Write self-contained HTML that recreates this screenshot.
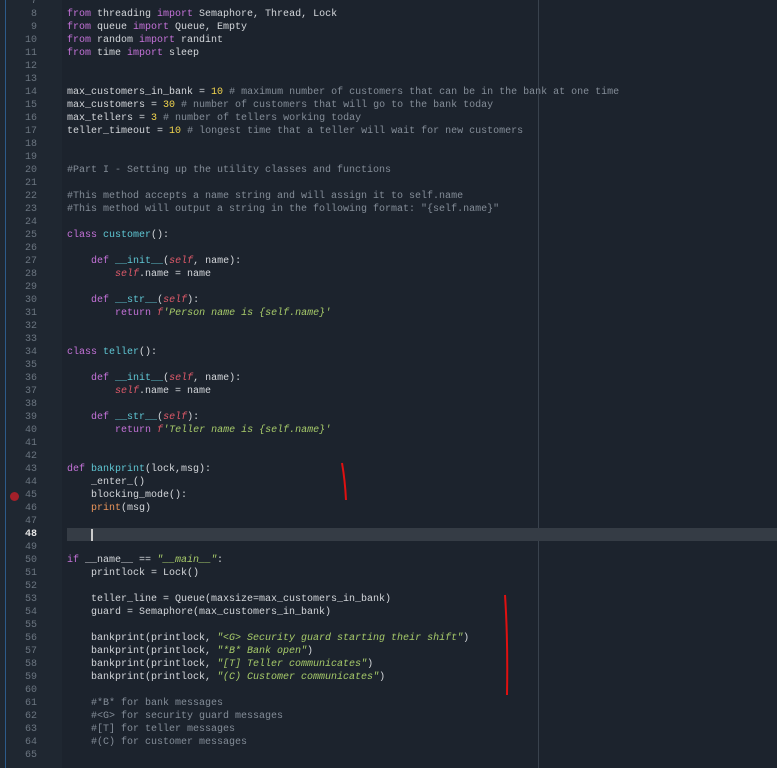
<!DOCTYPE html><html><head><meta charset="utf-8"><style>
body{margin:0;width:777px;height:768px;overflow:hidden;background:#1c232d;font-family:"Liberation Mono",monospace;font-size:10px;}
#g{position:absolute;left:0;top:0;width:62px;height:768px;background:#1f2731;}
#b{position:absolute;left:5px;top:0;width:1px;height:768px;background:#2d5b8a;}
#r{position:absolute;left:538px;top:0;width:1px;height:768px;background:#39424d;}
#hl{position:absolute;left:67px;top:528px;width:710px;height:13px;background:#353c45;}
#cur{position:absolute;left:91px;top:529px;width:2px;height:12px;background:#ccc;}
#bp{position:absolute;left:10px;top:492px;width:9px;height:9px;border-radius:50%;background:#a3202a;}
pre{margin:0;position:absolute;top:-5px;line-height:13px;font:inherit;line-height:13px;}
#n{left:0;width:37px;text-align:right;color:#6b7580;}
#c{left:67px;color:#d4d7db;}
.k{color:#c472d8}.n{color:#f2d54e}.m{color:#848d98}.s{color:#a8cc6a;font-style:italic}.f{color:#5fc7d4}.p{color:#e9945a}.e{color:#e05a6a;font-style:italic}
</style></head><body>
<div id="g"></div><div id="b"></div><div id="r"></div><div id="hl"></div><div id="cur"></div><div id="bp"></div>
<pre id="n">7
8
9
10
11
12
13
14
15
16
17
18
19
20
21
22
23
24
25
26
27
28
29
30
31
32
33
34
35
36
37
38
39
40
41
42
43
44
45
46
47
<b style="color:#e6e6e6">48</b>
49
50
51
52
53
54
55
56
57
58
59
60
61
62
63
64
65</pre>
<pre id="c">

<span class="k">from</span> threading <span class="k">import</span> Semaphore, Thread, Lock
<span class="k">from</span> queue <span class="k">import</span> Queue, Empty
<span class="k">from</span> random <span class="k">import</span> randint
<span class="k">from</span> time <span class="k">import</span> sleep


max_customers_in_bank = <span class="n">10</span> <span class="m"># maximum number of customers that can be in the bank at one time</span>
max_customers = <span class="n">30</span> <span class="m"># number of customers that will go to the bank today</span>
max_tellers = <span class="n">3</span> <span class="m"># number of tellers working today</span>
teller_timeout = <span class="n">10</span> <span class="m"># longest time that a teller will wait for new customers</span>


<span class="m">#Part I - Setting up the utility classes and functions</span>

<span class="m">#This method accepts a name string and will assign it to self.name</span>
<span class="m">#This method will output a string in the following format: "{self.name}"</span>

<span class="k">class</span> <span class="f">customer</span>():

    <span class="k">def</span> <span class="f">__init__</span>(<span class="e">self</span>, name):
        <span class="e">self</span>.name = name

    <span class="k">def</span> <span class="f">__str__</span>(<span class="e">self</span>):
        <span class="k">return</span> <span class="s"><span class="e">f</span>'Person name is {self.name}'</span>


<span class="k">class</span> <span class="f">teller</span>():

    <span class="k">def</span> <span class="f">__init__</span>(<span class="e">self</span>, name):
        <span class="e">self</span>.name = name

    <span class="k">def</span> <span class="f">__str__</span>(<span class="e">self</span>):
        <span class="k">return</span> <span class="s"><span class="e">f</span>'Teller name is {self.name}'</span>


<span class="k">def</span> <span class="f">bankprint</span>(lock,msg):
    _enter_()
    blocking_mode():
    <span class="p">print</span>(msg)



<span class="k">if</span> __name__ == <span class="s">"__main__"</span>:
    printlock = Lock()

    teller_line = Queue(maxsize=max_customers_in_bank)
    guard = Semaphore(max_customers_in_bank)

    bankprint(printlock, <span class="s">"&lt;G&gt; Security guard starting their shift"</span>)
    bankprint(printlock, <span class="s">"*B* Bank open"</span>)
    bankprint(printlock, <span class="s">"[T] Teller communicates"</span>)
    bankprint(printlock, <span class="s">"(C) Customer communicates"</span>)

    <span class="m">#*B* for bank messages</span>
    <span class="m">#&lt;G&gt; for security guard messages</span>
    <span class="m">#[T] for teller messages</span>
    <span class="m">#(C) for customer messages</span>
</pre>
<svg style="position:absolute;left:0;top:0" width="777" height="768"><path d="M342 463 Q345 480 346 500" stroke="#e01010" stroke-width="2" fill="none"/><path d="M505 595 Q508 640 507 695" stroke="#e01010" stroke-width="2" fill="none"/></svg>
</body></html>
